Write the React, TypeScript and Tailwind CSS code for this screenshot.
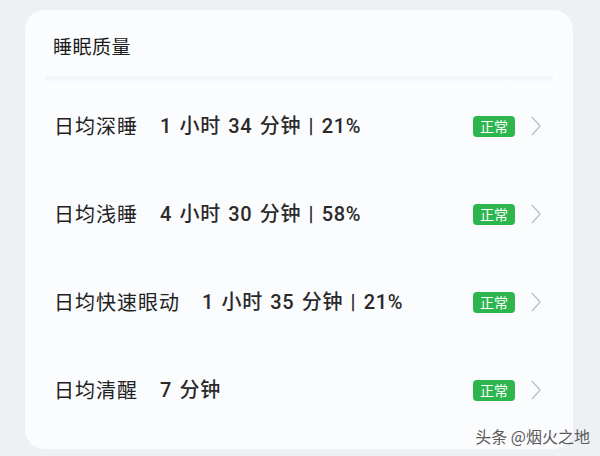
import React from 'react';

const rows = [
  { label: '日均深睡', value: '1 小时 34 分钟 | 21%' },
  { label: '日均浅睡', value: '4 小时 30 分钟 | 58%' },
  { label: '日均快速眼动', value: '1 小时 35 分钟 | 21%' },
  { label: '日均清醒', value: '7 分钟' },
];

export default function App() {
  return (
    <div
      className="relative w-[600px] h-[456px] overflow-hidden bg-[#eef0f3] pt-[10px] pl-[25px]"
      style={{ fontFamily: '"Noto Sans CJK SC", "Noto Sans", sans-serif' }}
    >
      <div className="w-[548px] h-[439px] rounded-[20px] bg-[#fbfcfe] flex flex-col">
        {/* Title */}
        <div className="pl-[28px] pt-[22px] h-[64px] text-[19px] text-[#1c1c1c] leading-[28px] tracking-[0.5px]">
          睡眠质量
        </div>
        <div className="mx-[20px] h-[8px] bg-gradient-to-b from-[#fbfcfe] via-[#f2f4f7] to-[#fbfcfe]" />

        {/* Rows */}
        {rows.map((row, i) => (
          <div key={i} className="h-[88px] flex items-center pl-[29px] pr-[30px]">
            <span className="text-[20px] text-[#222] tracking-[1px]">{row.label}</span>
            <span
              className="ml-[22px] text-[20px] font-medium text-[#2a2a2a] tracking-[0.6px] [word-spacing:2px]"
              style={{ fontFamily: 'Roboto, "Noto Sans CJK SC", sans-serif' }}
            >
              {row.value}
            </span>
            <span className="ml-auto w-[42px] h-[21px] rounded-[4px] bg-[#2eb64e] text-white text-[14px] leading-[21px] text-center">
              正常
            </span>
            <svg className="ml-[14px]" width="14" height="22" viewBox="0 0 14 22" fill="none">
              <path d="M3 2 L11 11 L3 20" stroke="#b8bcc2" strokeWidth="1.2" />
            </svg>
          </div>
        ))}
      </div>

      {/* Watermark */}
      <div className="absolute right-[10px] bottom-[12px] text-[16px] text-[#5a5a5a] leading-none">
        头条 @烟火之地
      </div>
    </div>
  );
}
